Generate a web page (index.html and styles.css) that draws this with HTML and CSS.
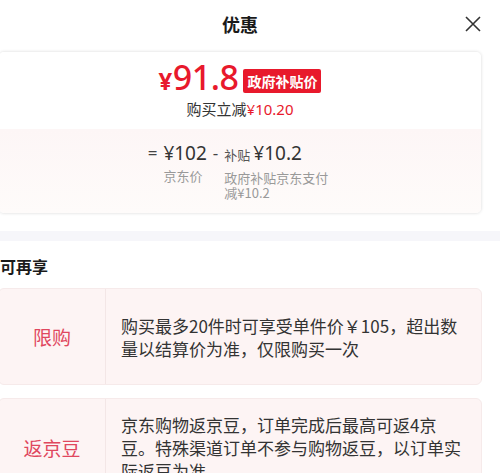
FILE: index.html
```html
<!DOCTYPE html>
<html lang="zh">
<head>
<meta charset="utf-8">
<link rel="stylesheet" href="styles.css">
</head>
<body>
<div class="sheet">
  <header class="head">
    <h1 class="title">优惠</h1>
    <button class="close" aria-label="关闭">
      <svg width="16" height="16" viewBox="0 0 16 16"><path d="M1 1L15 15M15 1L1 15" stroke="#333" stroke-width="1.6" fill="none"/></svg>
    </button>
  </header>

  <section class="price-card">
    <div class="price-top">
      <div class="price-line">
        <span class="price"><span class="yen">¥</span>91.8</span>
        <span class="badge">政府补贴价</span>
      </div>
      <div class="save">购买立减<span class="red">¥10.20</span></div>
    </div>
    <div class="price-calc">
      <span class="op">=</span>
      <div class="term">
        <div class="num">¥102</div>
        <div class="cap">京东价</div>
      </div>
      <span class="op minus">-</span>
      <div class="term">
        <div class="num"><span class="small">补贴</span>¥10.2</div>
        <div class="cap wide">政府补贴京东支付减¥10.2</div>
      </div>
    </div>
  </section>

  <div class="divider"></div>

  <section class="more">
    <h2 class="more-title">可再享</h2>
    <div class="promo">
      <div class="promo-label">限购</div>
      <div class="promo-text">购买最多20件时可享受单件价￥105，超出数量以结算价为准，仅限购买一次</div>
    </div>
    <div class="promo">
      <div class="promo-label">返京豆</div>
      <div class="promo-text">京东购物返京豆，订单完成后最高可返4京豆。特殊渠道订单不参与购物返豆，以订单实际返豆为准</div>
    </div>
  </section>
</div>
</body>
</html>
```

FILE: styles.css
```css
html, body {
  margin: 0;
  padding: 0;
  background: #fff;
  overflow: hidden;
}
body {
  font-family: "Noto Sans CJK SC", "Noto Sans", sans-serif;
  color: #333;
}
.sheet {
  width: 512px;
  margin-left: -12px;
}
.head {
  height: 50px;
  display: flex;
  align-items: center;
  justify-content: center;
  position: relative;
  padding-right: 8px;
}
.title {
  margin: 0;
  font-size: 18px;
  font-weight: 700;
  color: #1a1a1a;
  line-height: 24px;
  margin-top: -2px;
}
.close {
  position: absolute;
  right: 19px;
  top: 16px;
  border: 0;
  background: none;
  padding: 0;
  width: 16px;
  height: 16px;
}
.price-card {
  margin: 1px 18px 0 10px;
  border-radius: 6px;
  box-shadow: 0 0 3px rgba(0,0,0,0.08);
  border: 1px solid #f0f0f0;
  overflow: hidden;
}
.price-top {
  height: 77px;
  display: flex;
  flex-direction: column;
  align-items: center;
  background: #fff;
}
.price-line {
  display: flex;
  align-items: center;
  gap: 5px;
  margin-top: 9px;
  height: 36px;
}
.price {
  font-family: "Noto Sans", sans-serif;
  font-size: 34px;
  font-weight: 500;
  color: #e8192c;
  letter-spacing: -0.5px;
  line-height: 36px;
}
.yen {
  font-size: 24px;
  font-weight: 700;
  margin-right: 1px;
}
.badge {
  background: #e8192c;
  color: #fff;
  font-size: 14px;
  font-weight: 700;
  padding: 0 4px;
  height: 24px;
  line-height: 24px;
  border-radius: 2px;
  margin-top: 3px;
}
.save {
  font-size: 15px;
  line-height: 20px;
  margin-top: 2px;
  color: #333;
}
.red {
  color: #e8192c;
  font-family: "Noto Sans", sans-serif;
}
.price-calc {
  height: 84px;
  background: linear-gradient(#fdf6f6, #fefbfa);
  display: flex;
  justify-content: center;
  align-items: flex-start;
  gap: 6px;
  padding-top: 11px;
  box-sizing: border-box;
}
.op {
  font-family: "Noto Sans", sans-serif;
  font-size: 17px;
  line-height: 26px;
  color: #444;
}
.term {
  display: flex;
  flex-direction: column;
}
.num {
  font-family: "Noto Sans", sans-serif;
  font-size: 19px;
  line-height: 26px;
  color: #333;
}
.small {
  font-family: "Noto Sans CJK SC", sans-serif;
  font-size: 13px;
  color: #555;
  margin-right: 3px;
}
.cap {
  font-size: 13px;
  line-height: 15px;
  color: #999;
  margin-top: 2px;
}
.cap.wide {
  width: 108px;
}
.divider {
  height: 10px;
  background: #f6f6fa;
  margin-top: 17px;
}
.more {
  padding: 0 18px 0 10px;
}
.more-title {
  margin: 0;
  padding: 14px 0 11px 2px;
  font-size: 16px;
  font-weight: 700;
  color: #1a1a1a;
  line-height: 22px;
}
.promo {
  display: flex;
  background: #fdf4f4;
  border: 1px solid #f6eaea;
  border-radius: 6px;
  margin-bottom: 13px;
  min-height: 95px;
}
.promo-label {
  width: 106px;
  flex-shrink: 0;
  display: flex;
  align-items: center;
  justify-content: center;
  font-size: 19px;
  color: #e0475e;
  border-right: 1px solid #f3e6e6;
}
.promo-text {
  flex: 1;
  min-width: 0;
  padding: 14px 14px 14px 15px;
  font-size: 17px;
  line-height: 23px;
  color: #333;
  display: flex;
  align-items: center;
}
```
